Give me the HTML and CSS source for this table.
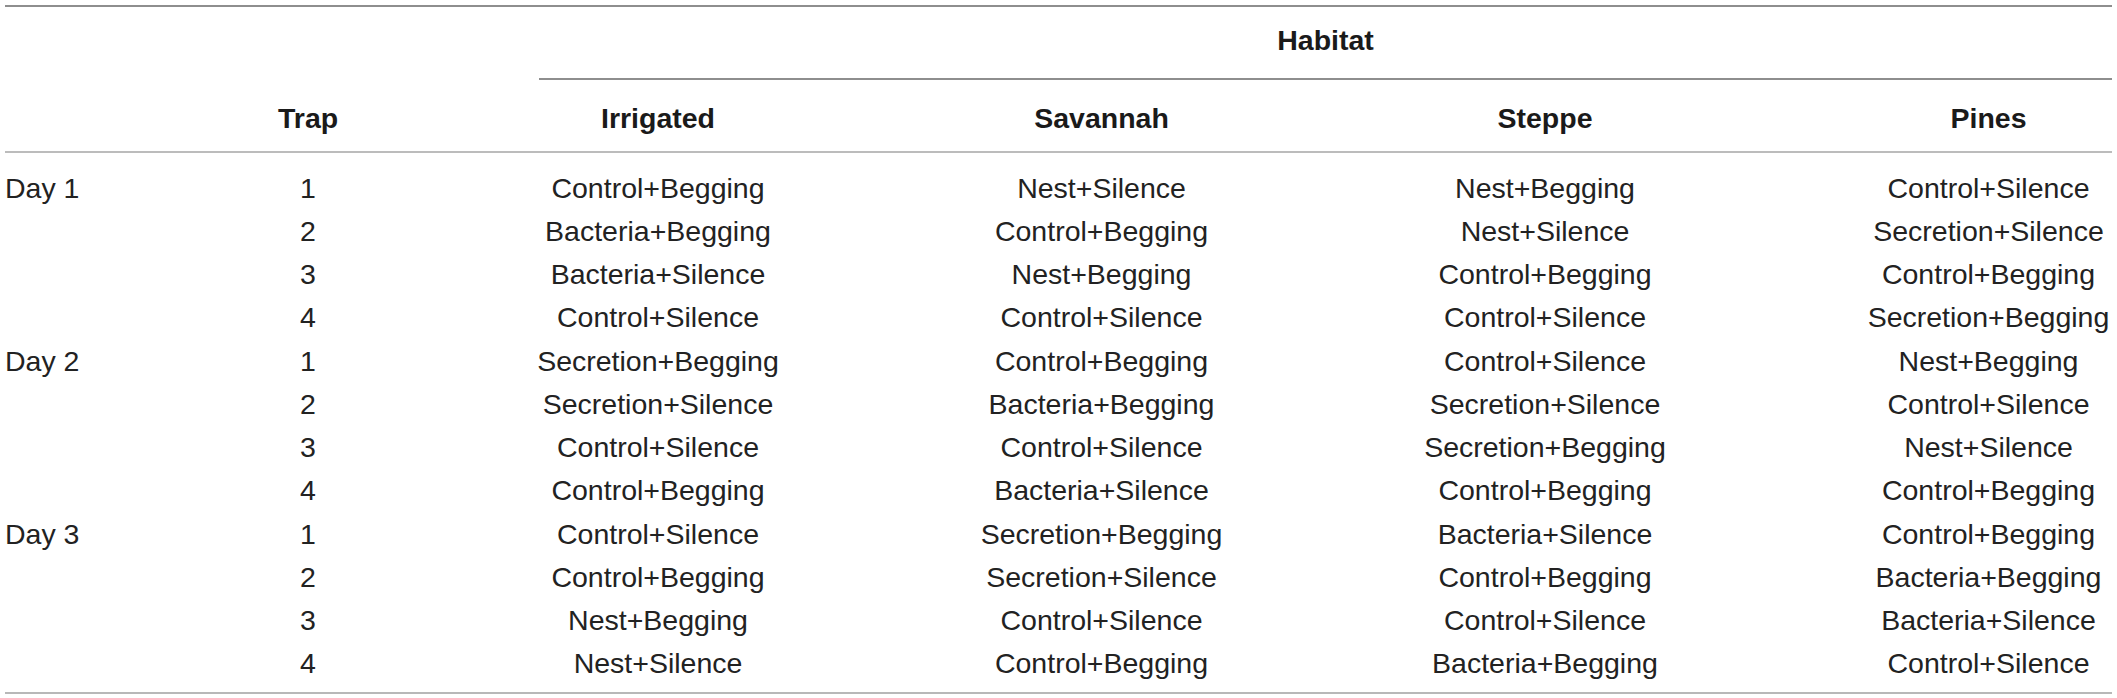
FILE: index.html
```html
<!DOCTYPE html>
<html>
<head>
<meta charset="utf-8">
<link rel="stylesheet" href="styles.css">
</head>
<body>
<div class="wrap">
  <div class="table">
    <div class="row top-row">
      <div class="cell habitat">Habitat</div>
    </div>
    <div class="row head-row">
      <div class="cell"></div>
      <div class="cell c">Trap</div>
      <div class="cell c">Irrigated</div>
      <div class="cell c">Savannah</div>
      <div class="cell c">Steppe</div>
      <div class="cell c">Pines</div>
    </div>
    <div class="body">
      <div class="row"><div class="cell">Day 1</div><div class="cell c">1</div><div class="cell c">Control+Begging</div><div class="cell c">Nest+Silence</div><div class="cell c">Nest+Begging</div><div class="cell c">Control+Silence</div></div>
      <div class="row"><div class="cell"></div><div class="cell c">2</div><div class="cell c">Bacteria+Begging</div><div class="cell c">Control+Begging</div><div class="cell c">Nest+Silence</div><div class="cell c">Secretion+Silence</div></div>
      <div class="row"><div class="cell"></div><div class="cell c">3</div><div class="cell c">Bacteria+Silence</div><div class="cell c">Nest+Begging</div><div class="cell c">Control+Begging</div><div class="cell c">Control+Begging</div></div>
      <div class="row"><div class="cell"></div><div class="cell c">4</div><div class="cell c">Control+Silence</div><div class="cell c">Control+Silence</div><div class="cell c">Control+Silence</div><div class="cell c">Secretion+Begging</div></div>
      <div class="row"><div class="cell">Day 2</div><div class="cell c">1</div><div class="cell c">Secretion+Begging</div><div class="cell c">Control+Begging</div><div class="cell c">Control+Silence</div><div class="cell c">Nest+Begging</div></div>
      <div class="row"><div class="cell"></div><div class="cell c">2</div><div class="cell c">Secretion+Silence</div><div class="cell c">Bacteria+Begging</div><div class="cell c">Secretion+Silence</div><div class="cell c">Control+Silence</div></div>
      <div class="row"><div class="cell"></div><div class="cell c">3</div><div class="cell c">Control+Silence</div><div class="cell c">Control+Silence</div><div class="cell c">Secretion+Begging</div><div class="cell c">Nest+Silence</div></div>
      <div class="row"><div class="cell"></div><div class="cell c">4</div><div class="cell c">Control+Begging</div><div class="cell c">Bacteria+Silence</div><div class="cell c">Control+Begging</div><div class="cell c">Control+Begging</div></div>
      <div class="row"><div class="cell">Day 3</div><div class="cell c">1</div><div class="cell c">Control+Silence</div><div class="cell c">Secretion+Begging</div><div class="cell c">Bacteria+Silence</div><div class="cell c">Control+Begging</div></div>
      <div class="row"><div class="cell"></div><div class="cell c">2</div><div class="cell c">Control+Begging</div><div class="cell c">Secretion+Silence</div><div class="cell c">Control+Begging</div><div class="cell c">Bacteria+Begging</div></div>
      <div class="row"><div class="cell"></div><div class="cell c">3</div><div class="cell c">Nest+Begging</div><div class="cell c">Control+Silence</div><div class="cell c">Control+Silence</div><div class="cell c">Bacteria+Silence</div></div>
      <div class="row"><div class="cell"></div><div class="cell c">4</div><div class="cell c">Nest+Silence</div><div class="cell c">Control+Begging</div><div class="cell c">Bacteria+Begging</div><div class="cell c">Control+Silence</div></div>
    </div>
  </div>
</div>
</body>
</html>
```

FILE: styles.css
```css
html, body {
  margin: 0;
  padding: 0;
  background: #ffffff;
}

.wrap {
  padding: 5px 5px 0 5px;
}

.table {
  width: 2107px;
  border-top: 2px solid #8e8e8e;
  border-bottom: 2px solid #b8b8b8;
  font-family: "Liberation Sans", Arial, sans-serif;
  font-size: 28.5px;
  color: #222222;
}

.row {
  display: grid;
  grid-template-columns: 76.5px 60px 247px 247px 247px 247px;
  column-gap: 196.5px;
  line-height: 43.25px;
}

.cell {
  white-space: nowrap;
}

.c {
  text-align: center;
}

.top-row {
  padding-top: 12px;
}

.habitat {
  grid-column: 3 / 7;
  margin-left: 4.5px;
  padding-bottom: 16px;
  border-bottom: 2px solid #8e8e8e;
  text-align: center;
  font-weight: bold;
  color: #1a1a1a;
}

.head-row {
  padding-top: 17px;
  padding-bottom: 10px;
  border-bottom: 2px solid #bcbcbc;
  font-weight: bold;
  color: #1a1a1a;
}

.body {
  padding-top: 14px;
  padding-bottom: 6px;
}
```
